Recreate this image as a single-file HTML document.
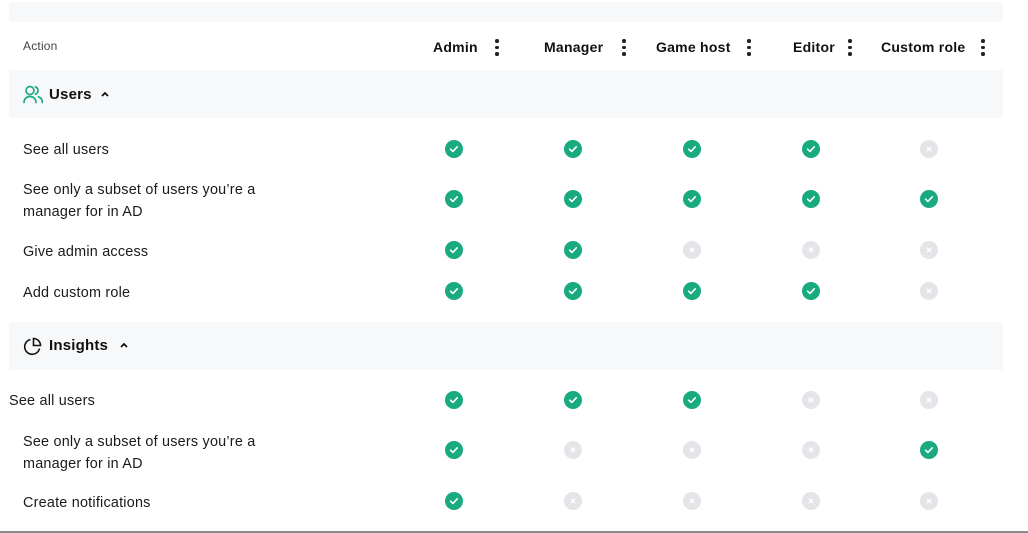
<!DOCTYPE html>
<html><head><meta charset="utf-8"><style>
*{margin:0;padding:0;box-sizing:border-box}
body{width:1028px;height:533px;background:#fff;font-family:"Liberation Sans",sans-serif;color:#111;position:relative;overflow:hidden}
.a{position:absolute}
.band{position:absolute;left:9px;width:994px;background:#f7f8fa}
.t{position:absolute;font-size:14.4px;line-height:22px;color:#1a1a1a;letter-spacing:0.22px}
.h{position:absolute;top:37px;font-size:14px;font-weight:bold;line-height:20px;color:#111;letter-spacing:0.25px}
.dots{position:absolute;top:39px;width:4px;height:17px}
.dots i{display:block;width:3.5px;height:3.5px;border-radius:50%;background:#222;margin-bottom:3px}
.sec{position:absolute;left:49px;font-size:15px;font-weight:bold;letter-spacing:0.2px}
</style></head><body>
<div class="band" style="top:2px;height:20px"></div>
<div class="band" style="top:70px;height:48px"></div>
<div class="band" style="top:322px;height:48px"></div>
<div class="a" style="left:0;top:531px;width:1028px;height:2px;background:#8a8a8a"></div>

<div class="t" style="left:23px;top:35px;font-size:12px;color:#444;letter-spacing:0.2px">Action</div>
<div class="h" style="left:433px">Admin</div><div class="dots" style="left:495px"><i></i><i></i><i></i></div>
<div class="h" style="left:544px">Manager</div><div class="dots" style="left:622px"><i></i><i></i><i></i></div>
<div class="h" style="left:656px">Game host</div><div class="dots" style="left:747px"><i></i><i></i><i></i></div>
<div class="h" style="left:793px">Editor</div><div class="dots" style="left:848px"><i></i><i></i><i></i></div>
<div class="h" style="left:881px">Custom role</div><div class="dots" style="left:981px"><i></i><i></i><i></i></div>

<svg class="a" style="left:23px;top:85px" width="20" height="19" viewBox="0 0 20 19" fill="none" stroke="#1aaa7f" stroke-width="1.7" stroke-linecap="round"><circle cx="7" cy="5.5" r="4"/><path d="M1 17.5c0-3.8 2.7-6 6-6s6 2.2 6 6"/><path d="M12.5 1.8a4 4 0 0 1 0 7.4M15.5 11.8c2.2.7 3.8 2.8 3.8 5.7"/></svg>
<div class="sec" style="top:86px">Users</div>
<svg class="a" style="left:100px;top:90px" width="10" height="8" viewBox="0 0 10 8" fill="none" stroke="#111" stroke-width="1.8"><path d="M2 6l3-3 3 3"/></svg>

<svg class="a" style="left:23px;top:337px" width="19" height="19" viewBox="0 0 19 19" fill="none" stroke="#111" stroke-width="1.6"><path d="M7.5 2.5A7.5 7.5 0 1 0 16.5 11.5"/><path d="M10.5 1.5v7h7a7 7 0 0 0-7-7z"/></svg>
<div class="sec" style="top:337px">Insights</div>
<svg class="a" style="left:119px;top:341px" width="10" height="8" viewBox="0 0 10 8" fill="none" stroke="#111" stroke-width="1.8"><path d="M2 6l3-3 3 3"/></svg>

<div class="t" style="left:23px;top:139px">See all users</div>
<div class="t" style="left:23px;top:179px">See only a subset of users you’re a<br>manager for in AD</div>
<div class="t" style="left:23px;top:241px">Give admin access</div>
<div class="t" style="left:23px;top:282px">Add custom role</div>
<div class="t" style="left:9px;top:390px">See all users</div>
<div class="t" style="left:23px;top:431px">See only a subset of users you’re a<br>manager for in AD</div>
<div class="t" style="left:23px;top:492px">Create notifications</div>

<svg width="0" height="0" style="position:absolute"><defs>
<symbol id="ck" viewBox="0 0 18 18"><circle cx="9" cy="9" r="9" fill="#1aaa7f"/><path d="M5.6 9.2l2.3 2.2 4.4-4.6" fill="none" stroke="#fff" stroke-width="1.6" stroke-linecap="round" stroke-linejoin="round"/></symbol>
<symbol id="xx" viewBox="0 0 18 18"><circle cx="9" cy="9" r="9" fill="#e3e5e8"/><path d="M7.3 7.3l3.4 3.4M10.7 7.3l-3.4 3.4" stroke="#fff" stroke-width="1.4" stroke-linecap="round"/></symbol>
</defs></svg>
<div id="g"></div>
<script>
var cols=[454,573,692,811,929];
var rows=[[149,"yyyyn"],[199,"yyyyy"],[250,"yynnn"],[291,"yyyyn"],[400,"yyynn"],[450,"ynnny"],[501,"ynnnn"]];
var h="";
rows.forEach(function(r){for(var i=0;i<5;i++){h+='<svg class="a" style="left:'+(cols[i]-9)+'px;top:'+(r[0]-9)+'px" width="18" height="18"><use href="#'+(r[1][i]=="y"?"ck":"xx")+'"/></svg>';}});
document.getElementById("g").innerHTML=h;
</script>
</body></html>
